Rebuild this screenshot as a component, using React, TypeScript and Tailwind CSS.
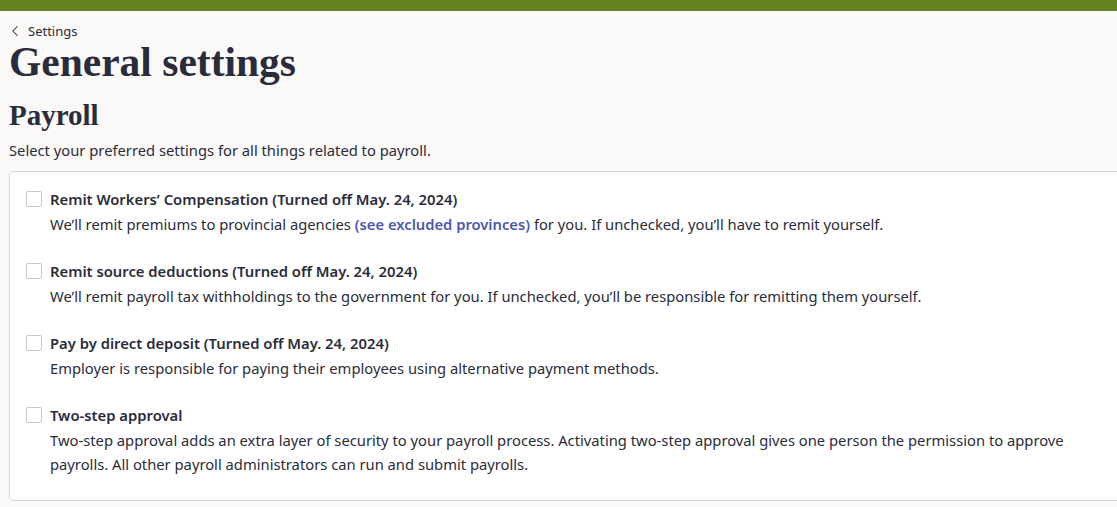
import { ChevronLeft } from 'lucide-react';

type Setting = {
  title: string;
  body: React.ReactNode;
};

const settings: Setting[] = [
  {
    title: 'Remit Workers’ Compensation (Turned off May. 24, 2024)',
    body: (
      <>
        We’ll remit premiums to provincial agencies{' '}
        <a href="#" className="font-semibold text-[#4b58b0]">
          (see excluded provinces)
        </a>{' '}
        for you. If unchecked, you’ll have to remit yourself.
      </>
    ),
  },
  {
    title: 'Remit source deductions (Turned off May. 24, 2024)',
    body: 'We’ll remit payroll tax withholdings to the government for you. If unchecked, you’ll be responsible for remitting them yourself.',
  },
  {
    title: 'Pay by direct deposit (Turned off May. 24, 2024)',
    body: 'Employer is responsible for paying their employees using alternative payment methods.',
  },
  {
    title: 'Two-step approval',
    body: 'Two-step approval adds an extra layer of security to your payroll process. Activating two-step approval gives one person the permission to approve payrolls. All other payroll administrators can run and submit payrolls.',
  },
];

const sans = { fontFamily: '"Noto Sans", Lato, sans-serif' };
const serif = { fontFamily: '"Liberation Serif", "DejaVu Serif", serif' };

export default function App() {
  return (
    <div className="min-h-[507px] w-full overflow-hidden bg-[#faf9f8] text-[#2b2c3b]" style={sans}>
      <div className="h-[11px] bg-[#64821f]" />
      <div className="pl-[9px]">
        <a href="#" className="mt-[11px] flex items-center gap-[4px] text-[13px] leading-[16px] text-[#2b2c3b]">
          <ChevronLeft size={18} strokeWidth={1.4} className="-ml-[3px]" />
          Settings
        </a>
        <h1 className="mt-[0px] text-[41.5px] font-bold leading-[45px]" style={serif}>
          General settings
        </h1>
        <h2 className="mt-[13px] text-[29px] font-bold leading-[34px]" style={serif}>
          Payroll
        </h2>
        <p className="mt-[7px] text-[14.75px] leading-[22px]">
          Select your preferred settings for all things related to payroll.
        </p>
        <div className="mt-[10px] -mr-2 rounded-l-[5px] border border-[#d9d8d6] bg-white pb-[24px] pl-4 pr-6 pt-[17px]">
          <div className="flex flex-col gap-[25px]">
            {settings.map((s) => (
              <label key={s.title} className="flex gap-[8px]">
                <span className="mt-[2px] h-[16px] w-[16px] shrink-0 rounded-[2px] border border-[#c9c9c9] bg-white" />
                <span className="flex flex-col">
                  <span className="text-[14.8px] font-semibold leading-[20px]">{s.title}</span>
                  <span className="mt-[3px] text-[14.75px] leading-[24px]">{s.body}</span>
                </span>
              </label>
            ))}
          </div>
        </div>
      </div>
    </div>
  );
}
